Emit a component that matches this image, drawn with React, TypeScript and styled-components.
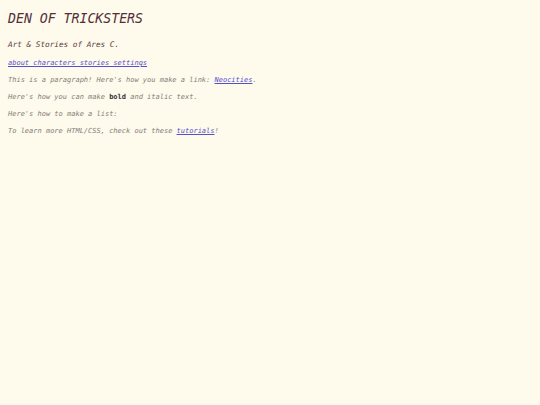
import styled, { createGlobalStyle } from 'styled-components'

const GlobalStyle = createGlobalStyle`
  html, body {
    margin: 0;
    padding: 0;
    background: #fefaec;
  }
  body {
    font-family: "DejaVu Sans Mono", "Liberation Mono", monospace;
    font-style: italic;
  }
`

const Page = styled.div`
  min-height: 405px;
  padding: 11px 8px;
  box-sizing: border-box;
  background: #fefaec;
  color: #857b76;
`

const Title = styled.h1`
  margin: 0;
  font-size: 13.2px;
  line-height: 16px;
  font-weight: normal;
  color: #52303a;
`

const Subtitle = styled.h2`
  margin: 13px 0 0;
  font-size: 7.7px;
  line-height: 10px;
  font-weight: normal;
  color: #5a3a40;
`

const Nav = styled.nav`
  margin-top: 8px;
  font-size: 7px;
  line-height: 10px;
  display: flex;
`

const Link = styled.a`
  color: #5550cc;
  text-decoration: underline;
`

const Paragraph = styled.p`
  margin: 7px 0 0;
  font-size: 7px;
  line-height: 10px;
`

const Bold = styled.b`
  font-style: normal;
  color: #3a3233;
`

const App = () => {
  return (
    <>
      <GlobalStyle />
      <Page>
        <Title>DEN OF TRICKSTERS</Title>
        <Subtitle>Art &amp; Stories of Ares C.</Subtitle>
        <Nav>
          <Link href="#">about characters stories settings</Link>
        </Nav>
        <Paragraph>
          This is a paragraph! Here's how you make a link: <Link href="#">Neocities</Link>.
        </Paragraph>
        <Paragraph>
          Here's how you can make <Bold>bold</Bold> and italic text.
        </Paragraph>
        <Paragraph>Here's how to make a list:</Paragraph>
        <Paragraph>
          To learn more HTML/CSS, check out these <Link href="#">tutorials</Link>!
        </Paragraph>
      </Page>
    </>
  )
}

export default App
